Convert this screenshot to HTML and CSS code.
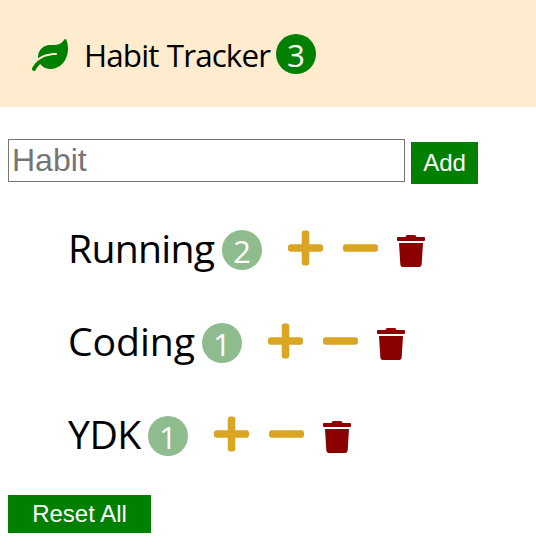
FILE: index.html
```html
<!DOCTYPE html>
<html lang="en">
<head>
<meta charset="utf-8">
<title>Habit Tracker</title>
<link rel="stylesheet" href="styles.css">
</head>
<body>
<svg class="sprite" aria-hidden="true">
  <symbol id="plus" viewBox="0 0 448 512"><path d="M416 208H272V64c0-17.67-14.33-32-32-32h-32c-17.67 0-32 14.33-32 32v144H32c-17.67 0-32 14.33-32 32v32c0 17.67 14.33 32 32 32h144v144c0 17.67 14.33 32 32 32h32c17.67 0 32-14.33 32-32V304h144c17.67 0 32-14.33 32-32v-32c0-17.67-14.33-32-32-32z"/></symbol>
  <symbol id="minus" viewBox="0 0 448 512"><path d="M416 208H32c-17.67 0-32 14.33-32 32v32c0 17.67 14.33 32 32 32h384c17.67 0 32-14.33 32-32v-32c0-17.67-14.33-32-32-32z"/></symbol>
  <symbol id="trash" viewBox="0 0 448 512"><path d="M432 32H312l-9.4-18.7A24 24 0 0 0 281.1 0H166.8a23.72 23.72 0 0 0-21.4 13.3L136 32H16A16 16 0 0 0 0 48v32a16 16 0 0 0 16 16h416a16 16 0 0 0 16-16V48a16 16 0 0 0-16-16zM53.2 467a48 48 0 0 0 47.9 45h245.8a48 48 0 0 0 47.9-45L416 128H32z"/></symbol>
</svg>
<header class="navbar">
  <svg class="leaf" viewBox="0 0 576 512"><path d="M546.2 9.7c-5.6-12.5-21.6-13-28.3-1.2C486.9 62.4 431.4 96 368 96h-80C182 96 96 182 96 288c0 7 .8 13.7 1.5 20.5C161.3 262.8 253.4 224 384 224c8.800 0 16 7.200 16 16s-7.200 16-16 16C132.600 256 26 410.100 2.400 468c-6.600 16.300 1.200 34.900 17.500 41.600 16.400 6.800 35-1.100 41.800-17.300 1.500-3.600 20.900-47.900 71.900-90.600 32.400 43.900 94 85.800 174.900 77.200C465.500 467.500 576 326.700 576 154.300c0-50.200-10.800-102.200-29.800-144.600z"/></svg>
  <span class="title">Habit Tracker</span>
  <span class="badge total">3</span>
</header>
<form class="add-form">
  <input class="add-input" type="text" placeholder="Habit">
  <button class="add-button" type="button">Add</button>
</form>
<ul class="habits">
  <li class="habit">
    <span class="name running">Running</span>
    <span class="badge">2</span>
    <button class="icon-button" type="button" aria-label="Increase"><svg class="step"><use href="#plus"/></svg></button>
    <button class="icon-button" type="button" aria-label="Decrease"><svg class="step"><use href="#minus"/></svg></button>
    <button class="icon-button" type="button" aria-label="Delete"><svg class="trash"><use href="#trash"/></svg></button>
  </li>
  <li class="habit">
    <span class="name coding">Coding</span>
    <span class="badge">1</span>
    <button class="icon-button" type="button" aria-label="Increase"><svg class="step"><use href="#plus"/></svg></button>
    <button class="icon-button" type="button" aria-label="Decrease"><svg class="step"><use href="#minus"/></svg></button>
    <button class="icon-button" type="button" aria-label="Delete"><svg class="trash"><use href="#trash"/></svg></button>
  </li>
  <li class="habit">
    <span class="name ydk">YDK</span>
    <span class="badge">1</span>
    <button class="icon-button" type="button" aria-label="Increase"><svg class="step"><use href="#plus"/></svg></button>
    <button class="icon-button" type="button" aria-label="Decrease"><svg class="step"><use href="#minus"/></svg></button>
    <button class="icon-button" type="button" aria-label="Delete"><svg class="trash"><use href="#trash"/></svg></button>
  </li>
</ul>
<button class="reset-button" type="button">Reset All</button>
</body>
</html>
```
FILE: styles.css
```css
* {
  box-sizing: border-box;
}

body {
  margin: 0;
  background: white;
  font-family: "Open Sans", "Noto Sans", sans-serif;
}

.sprite {
  display: none;
}

svg {
  display: block;
  fill: currentColor;
}

.navbar {
  display: flex;
  align-items: center;
  height: 107px;
  padding: 1px 0 0 32px;
  background: blanchedalmond;
}

.leaf {
  width: 36px;
  height: 32px;
  margin-right: 16px;
  margin-top: 2px;
  color: green;
}

.title {
  width: 192px;
  margin-top: 2px;
  font-size: 31.4px;
  line-height: 40px;
  letter-spacing: -0.88px;
  word-spacing: 1px;
  white-space: nowrap;
}

.badge {
  width: 40px;
  height: 40px;
  border-radius: 50%;
  background: darkseagreen;
  color: white;
  font-size: 31.4px;
  line-height: 41px;
  text-align: center;
}

.total {
  background: green;
}

.add-form {
  display: flex;
  align-items: flex-start;
  margin: 32px 8px 0;
}

.add-input {
  width: 397px;
  height: 43px;
  margin-right: 6px;
  padding: 1px 2px 1px 3px;
  border: 1px solid #767676;
  border-radius: 0;
  background: white;
  font: 32px "Liberation Sans", sans-serif;
}

.add-input::placeholder {
  color: #757575;
}

.add-button,
.reset-button {
  display: block;
  padding: 0;
  border: 0;
  background: green;
  color: white;
  font: 24px "Liberation Sans", sans-serif;
}

.add-button {
  width: 67px;
  height: 42px;
  margin-top: 3px;
}

.habits {
  display: grid;
  gap: 53px;
  margin: 46px 0 39px;
  padding: 0 0 0 68px;
  list-style: none;
}

.habit {
  display: flex;
  height: 40px;
}

.name {
  margin-top: -2px;
  font-size: 39.2px;
  line-height: 40px;
  white-space: nowrap;
}

.running {
  width: 154px;
  letter-spacing: -0.75px;
}

.coding {
  width: 134px;
  letter-spacing: -0.1px;
}

.ydk {
  width: 80px;
  letter-spacing: -0.5px;
}

.icon-button {
  display: block;
  padding: 0;
  border: 0;
  background: none;
}

.step {
  width: 35px;
  height: 40px;
  margin-top: -4px;
  color: goldenrod;
}

.badge + .icon-button {
  margin-left: 26px;
}

.icon-button + .icon-button {
  margin-left: 20px;
}

.icon-button:last-child {
  margin-left: 19px;
}

.trash {
  width: 28px;
  height: 32px;
  margin-top: 2px;
  color: darkred;
}

.reset-button {
  width: 143px;
  height: 38px;
  margin-left: 8px;
}
```
